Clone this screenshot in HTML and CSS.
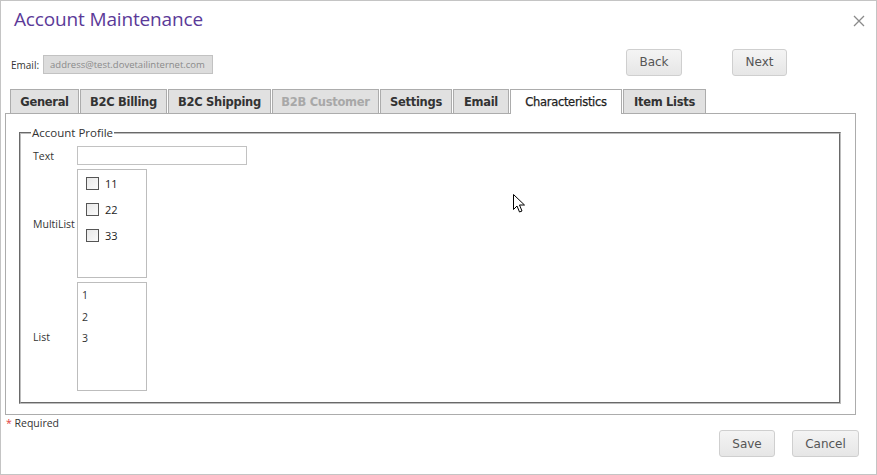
FILE: index.html
```html
<!DOCTYPE html>
<html>
<head>
<meta charset="utf-8">
<link rel="stylesheet" href="styles.css">
</head>
<body>
<div class="dialog">
  <div class="title-row">
    <h1 class="title">Account Maintenance</h1>
    <span class="close">
      <svg width="12" height="12" viewBox="0 0 12 12"><path d="M1 1 L11 11 M11 1 L1 11" stroke="#8a8a8a" stroke-width="1.3" fill="none"/></svg>
    </span>
  </div>
  <div class="top-row">
    <div class="email">
      <span class="email-label">Email:</span>
      <span class="email-box">address@test.dovetailinternet.com</span>
    </div>
    <div class="nav-buttons">
      <button class="btn btn-back">Back</button>
      <button class="btn btn-next">Next</button>
    </div>
  </div>
  <div class="tabs">
    <span class="tab t-general">General</span>
    <span class="tab t-billing">B2C Billing</span>
    <span class="tab t-shipping">B2C Shipping</span>
    <span class="tab t-b2b disabled">B2B Customer</span>
    <span class="tab t-settings">Settings</span>
    <span class="tab t-email">Email</span>
    <span class="tab t-char active">Characteristics</span>
    <span class="tab t-items">Item Lists</span>
  </div>
  <div class="panel">
    <fieldset class="profile">
      <legend>Account Profile</legend>
      <div class="grid">
        <label class="lbl">Text</label>
        <div class="text-input"></div>
        <label class="lbl">MultiList</label>
        <div class="box multi">
          <div class="chk-row"><span class="chk"></span><span>11</span></div>
          <div class="chk-row"><span class="chk"></span><span>22</span></div>
          <div class="chk-row"><span class="chk"></span><span>33</span></div>
        </div>
        <label class="lbl">List</label>
        <div class="box list">
          <div class="opt">1</div>
          <div class="opt">2</div>
          <div class="opt">3</div>
        </div>
      </div>
    </fieldset>
  </div>
  <div class="bottom-row">
    <div class="required"><span class="star">*</span> Required</div>
    <div class="bottom-buttons">
      <button class="btn btn-save">Save</button>
      <button class="btn btn-cancel">Cancel</button>
    </div>
  </div>
  <svg class="cursor" width="13" height="20" viewBox="0 0 13 20"><path d="M0.5 0.5 L0.5 15.5 L4 12 L6.5 18 L9 17 L6.5 11 L11.5 11 Z" fill="#fff" stroke="#000" stroke-width="1"/></svg>
</div>
</body>
</html>
```
FILE: styles.css
```css
html, body {
  margin: 0;
  padding: 0;
  background: #fff;
}
.dialog {
  position: relative;
  width: 877px;
  height: 475px;
  box-sizing: border-box;
  border: 1px solid #c4c4c4;
  font-family: "Open Sans", "Liberation Sans", sans-serif;
  color: #333;
}
.title-row {
  display: flex;
  justify-content: space-between;
  align-items: center;
  height: 36px;
  padding: 0 11px 0 13px;
}
.title {
  margin: 0;
  font-family: "Open Sans", "Liberation Sans", sans-serif;
  font-weight: 400;
  font-size: 19px;
  color: #5b3a98;
  letter-spacing: -0.15px;
}
.close {
  display: flex;
  margin-top: 4px;
}
.top-row {
  display: flex;
  justify-content: space-between;
  align-items: center;
  height: 30px;
  margin-top: 10px;
  padding-left: 10px;
}
.email {
  display: flex;
  align-items: center;
  margin-top: 5px;
}
.email-label {
  font-size: 10px;
  color: #333;
  margin-right: 4px;
}
.email-box {
  width: 170px;
  height: 19px;
  line-height: 18px;
  box-sizing: border-box;
  border: 1px solid #c2c2c2;
  background: #dcdcdc;
  color: #8a8a8a;
  font-size: 9.5px;
  padding-left: 6px;
}
.nav-buttons {
  display: flex;
  gap: 50px;
  margin-right: 89px;
}
.btn {
  height: 27px;
  box-sizing: border-box;
  border: 1px solid #cfcfcf;
  border-radius: 3px;
  background: linear-gradient(#f4f4f4, #e6e6e6);
  color: #555;
  font-family: "DejaVu Sans", sans-serif;
  font-size: 12px;
  padding: 0;
}
.btn-back { width: 56px; margin-left: 1px; }
.btn-next { width: 55px; }
.btn-save { width: 56px; }
.btn-cancel { width: 67px; }
.tabs {
  display: flex;
  gap: 1px;
  margin-top: 12px;
  padding-left: 9px;
  position: relative;
  z-index: 1;
}
.tab {
  height: 24px;
  box-sizing: border-box;
  border: 1px solid #acacac;
  border-bottom: none;
  background: #e1e1e1;
  font-family: "DejaVu Sans", sans-serif;
  font-weight: bold;
  font-size: 11.5px;
  color: #333;
  display: flex;
  align-items: center;
  justify-content: center;
  letter-spacing: -0.3px;
  padding-top: 1px;
}
.tab.disabled { color: #a8a8a8; }
.tab.active {
  background: #fff;
  height: 25px;
  margin-bottom: -1px;
  padding-bottom: 1px;
  font-weight: normal;
  color: #222;
  -webkit-text-stroke: 0.25px #222;
}
.t-general { width: 69px; }
.t-billing { width: 87px; }
.t-shipping { width: 103px; }
.t-b2b { width: 107px; }
.t-settings { width: 72px; }
.t-email { width: 56px; }
.t-char { width: 112px; }
.t-items { width: 83px; }
.panel {
  margin-left: 4px;
  width: 851px;
  height: 302px;
  box-sizing: border-box;
  border: 1px solid #acacac;
  padding: 11px 14px 0 13px;
}
.profile {
  margin: 0;
  height: 279px;
  box-sizing: border-box;
  border: 2px groove #bdbdbd;
  padding: 4px 10px 0 12px;
}
.profile legend {
  font-size: 11.5px;
  color: #333;
  padding: 0 1px;
  margin-left: -2px;
}
.grid {
  display: grid;
  grid-template-columns: 44px 170px;
  row-gap: 4px;
  align-items: center;
  margin-top: 2px;
}
.lbl {
  font-size: 10.5px;
  color: #333;
}
.text-input {
  width: 170px;
  height: 19px;
  box-sizing: border-box;
  border: 1px solid #c2c2c2;
}
.box {
  width: 70px;
  height: 109px;
  box-sizing: border-box;
  border: 1px solid #bdbdbd;
}
.multi {
  padding: 0 0 0 8px;
}
.list {
  padding: 4px 0 0 4px;
}
.chk-row {
  display: flex;
  align-items: center;
  height: 26px;
  font-size: 11px;
  color: #222;
}
.chk {
  width: 13px;
  height: 13px;
  box-sizing: border-box;
  border: 1px solid #555;
  background: linear-gradient(135deg, #e8e8e8, #fafafa);
  margin-right: 6px;
}
.opt {
  height: 21.5px;
  line-height: 17px;
  font-size: 10.5px;
  color: #333;
}
.bottom-row {
  display: flex;
  justify-content: space-between;
  padding-left: 5px;
  margin-top: 0;
}
.required {
  font-size: 10.5px;
  color: #333;
  margin-top: 1px;
}
.star { color: #e04040; }
.bottom-buttons {
  display: flex;
  gap: 17px;
  margin-top: 15px;
  margin-right: 17px;
}
.cursor {
  position: absolute;
  left: 512px;
  top: 193px;
}
```
